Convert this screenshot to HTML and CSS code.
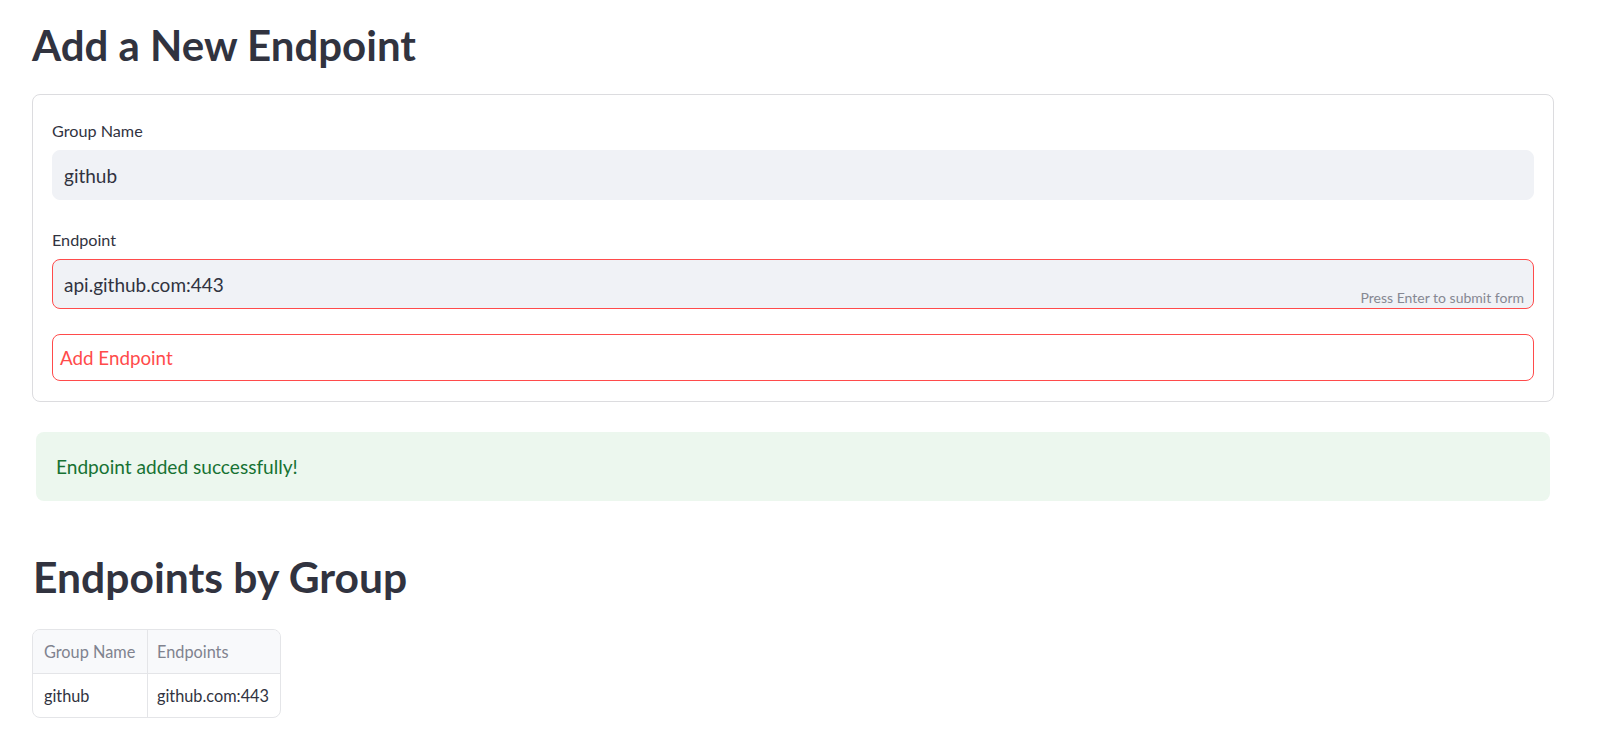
FILE: index.html
```html
<!DOCTYPE html>
<html lang="en">
<head>
<meta charset="utf-8">
<title>Endpoints</title>
<link rel="stylesheet" href="styles.css">
</head>
<body>
<main class="page">
  <h1 class="title">Add a New Endpoint</h1>
  <form class="form-box">
    <div class="field">
      <label class="label">Group Name</label>
      <div class="input"><span class="input-text">github</span></div>
    </div>
    <div class="field">
      <label class="label">Endpoint</label>
      <div class="input input-focus"><span class="input-text">api.github.com:443</span><span class="hint">Press Enter to submit form</span></div>
    </div>
    <div class="btn">Add Endpoint</div>
  </form>
  <div class="alert">Endpoint added successfully!</div>
  <h1 class="title title-second">Endpoints by Group</h1>
  <div class="table-wrap">
    <table class="table">
      <colgroup><col class="c1"><col class="c2"></colgroup>
      <thead>
        <tr><th class="cell first">Group Name</th><th class="cell">Endpoints</th></tr>
      </thead>
      <tbody>
        <tr><td class="cell first">github</td><td class="cell">github.com:443</td></tr>
      </tbody>
    </table>
  </div>
</main>
</body>
</html>
```
FILE: styles.css
```css
* { box-sizing: border-box; }
html, body { margin: 0; padding: 0; background: #ffffff; }
body {
  font-family: Lato, "Noto Sans", sans-serif;
  color: #31333f;
}
.page {
  padding: 20px 46px 0 32px;
  display: flex;
  flex-direction: column;
}
.title {
  margin: 0;
  font-size: 42px;
  font-weight: 700;
  line-height: 50px;
  color: #31333f;
}
.form-box {
  margin: 24px 0 0 0;
  border: 1px solid #dcdcdf;
  border-radius: 8px;
  padding: 24px 19px 20px 19px;
  display: flex;
  flex-direction: column;
  gap: 28px;
}
.field {
  display: flex;
  flex-direction: column;
  gap: 8px;
}
.field + .btn { margin-top: -3px; }
.label {
  font-size: 16.2px;
  line-height: 23px;
  color: #31333f;
}
.input {
  position: relative;
  height: 50px;
  background: #f0f2f6;
  border: 1px solid #f0f2f6;
  border-radius: 8px;
  display: flex;
  align-items: center;
  padding: 0 11px;
}
.input-focus { border-color: #ff4b4b; }
.input-text {
  font-size: 19px;
  color: #31333f;
}
.hint {
  position: absolute;
  right: 9px;
  bottom: 2px;
  font-size: 14px;
  line-height: 17px;
  color: #868892;
}
.btn {
  height: 47px;
  border: 1px solid #ff4b4b;
  border-radius: 8px;
  display: flex;
  align-items: center;
  padding: 0 7px;
  font-size: 18.8px;
  color: #ff4b4b;
  background: #ffffff;
}
.alert {
  margin: 30px 4px 0 4px;
  height: 69px;
  border-radius: 8px;
  background: #ecf7ee;
  color: #177233;
  display: flex;
  align-items: center;
  padding: 0 20px;
  font-size: 19.1px;
}
.title-second {
  margin-top: 51px;
  font-size: 42.6px;
  padding-left: 1px;
}
.table-wrap {
  margin-top: 27px;
  align-self: flex-start;
  border: 1px solid #e4e5e8;
  border-radius: 8px;
  overflow: hidden;
}
.table {
  border-collapse: separate;
  border-spacing: 0;
  table-layout: fixed;
  width: 247px;
  font-size: 16.3px;
}
.c1 { width: 115px; }
.c2 { width: 132px; }
.cell {
  text-align: left;
  font-weight: 400;
  padding: 0 0 0 9px;
  white-space: nowrap;
  height: 43px;
}
.first { border-right: 1px solid #e4e5e8; padding-left: 11px; }
th.cell {
  background: #f8f9fb;
  color: #80838f;
  height: 44px;
  border-bottom: 1px solid #e4e5e8;
}
td.cell { color: #31333f; }
```
